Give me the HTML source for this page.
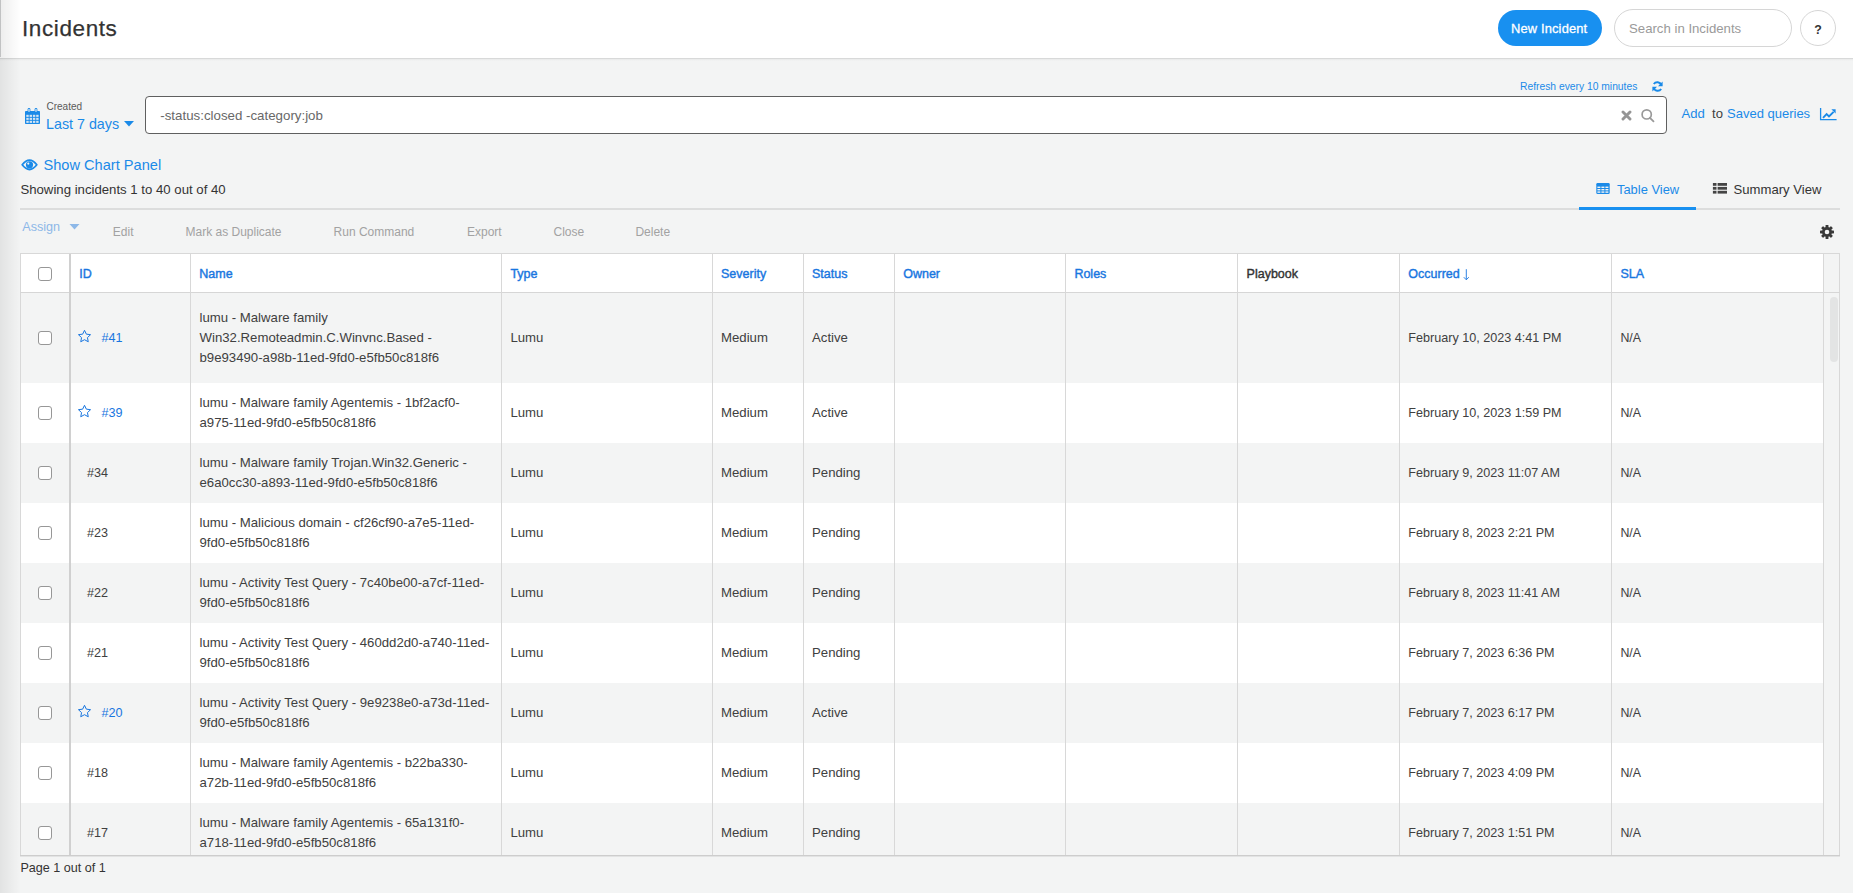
<!DOCTYPE html>
<html><head><meta charset="utf-8"><title>Incidents</title>
<style>
html,body{margin:0;padding:0;}
body{width:1853px;height:893px;overflow:hidden;position:relative;background:#f3f4f4;font-family:"Liberation Sans", sans-serif;}
.t{position:absolute;white-space:nowrap;}
.r{position:absolute;}
</style></head><body>
<div class="r" style="left:0px;top:0px;width:1853px;height:58px;background:#fff;"></div>
<div class="r" style="left:0px;top:58px;width:1853px;height:1px;background:#d8d9d9;"></div>
<div class="r" style="left:0px;top:59px;width:1853px;height:2px;background:linear-gradient(#e8e9e9,#f3f4f4);"></div>
<div class="r" style="left:0px;top:0px;width:1px;height:57px;background:#cfd0d1;"></div>
<div class="t" style="left:22px;top:18px;font-size:22.5px;line-height:22.5px;color:#333;letter-spacing:0.6px;-webkit-text-stroke:0.25px #333;">Incidents</div>
<div class="r" style="left:1498px;top:10px;width:104px;height:36px;background:#1890f0;border-radius:18px;"></div>
<div class="t" style="left:1511px;top:23px;font-size:12.9px;line-height:12.9px;color:#fff;letter-spacing:0.15px;-webkit-text-stroke:0.3px #fff;">New Incident</div>
<div class="r" style="left:1614px;top:9px;width:178px;height:38px;box-sizing:border-box;border:1px solid #d6d6d6;border-radius:19px;background:#fff;"></div>
<div class="t" style="left:1629px;top:22px;font-size:13.2px;line-height:13.2px;color:#9a9a9a;">Search in Incidents</div>
<div class="r" style="left:1800px;top:10px;width:36px;height:36px;box-sizing:border-box;border:1px solid #d6d6d6;border-radius:18px;background:#fff;"></div>
<div class="t" style="left:1814.3px;top:24px;font-size:12.4px;line-height:12.4px;color:#333;font-weight:700;">?</div>
<div class="t" style="left:1520px;top:82px;font-size:10.3px;line-height:10.3px;color:#1a8ae8;">Refresh every 10 minutes</div>
<svg class="r" style="left:1652px;top:81px" width="11" height="11" viewBox="0 0 11 11"><path d="M9.3 4.0A4.3 4.3 0 0 0 1.8 3.0" fill="none" stroke="#1a8ae8" stroke-width="1.9"/><path d="M10.6 0.6v4.6H6.0z" fill="#1a8ae8"/><path d="M1.7 7.0A4.3 4.3 0 0 0 9.2 8.0" fill="none" stroke="#1a8ae8" stroke-width="1.9"/><path d="M0.4 10.4V5.8H5.0z" fill="#1a8ae8"/></svg>
<svg class="r" style="left:25px;top:108px" width="15" height="16" viewBox="0 0 15 16"><rect x="0" y="3" width="15" height="13" rx="0.8" fill="#1a8ae8"/><rect x="2.6" y="0" width="2.8" height="4.6" rx="1.4" fill="#1a8ae8"/><rect x="9.6" y="0" width="2.8" height="4.6" rx="1.4" fill="#1a8ae8"/><rect x="3.4" y="0.9" width="1.2" height="3" rx="0.6" fill="#f3f4f4"/><rect x="10.4" y="0.9" width="1.2" height="3" rx="0.6" fill="#f3f4f4"/><rect x="1.30" y="6.80" width="2.4" height="2.1" fill="#f3f4f4" opacity="0.85"/><rect x="4.60" y="6.80" width="2.4" height="2.1" fill="#f3f4f4" opacity="0.85"/><rect x="7.90" y="6.80" width="2.4" height="2.1" fill="#f3f4f4" opacity="0.85"/><rect x="11.20" y="6.80" width="2.4" height="2.1" fill="#f3f4f4" opacity="0.85"/><rect x="1.30" y="9.80" width="2.4" height="2.1" fill="#f3f4f4" opacity="0.85"/><rect x="4.60" y="9.80" width="2.4" height="2.1" fill="#f3f4f4" opacity="0.85"/><rect x="7.90" y="9.80" width="2.4" height="2.1" fill="#f3f4f4" opacity="0.85"/><rect x="11.20" y="9.80" width="2.4" height="2.1" fill="#f3f4f4" opacity="0.85"/><rect x="1.30" y="12.80" width="2.4" height="2.1" fill="#f3f4f4" opacity="0.85"/><rect x="4.60" y="12.80" width="2.4" height="2.1" fill="#f3f4f4" opacity="0.85"/><rect x="7.90" y="12.80" width="2.4" height="2.1" fill="#f3f4f4" opacity="0.85"/><rect x="11.20" y="12.80" width="2.4" height="2.1" fill="#f3f4f4" opacity="0.85"/></svg>
<div class="t" style="left:46.4px;top:102px;font-size:10.06px;line-height:10.06px;color:#5a5a5a;">Created</div>
<div class="t" style="left:46px;top:117px;font-size:14.3px;line-height:14.3px;color:#1a8ae8;">Last 7 days</div>
<svg class="r" style="left:124px;top:121px" width="10" height="6" viewBox="0 0 10 6"><path d="M0 0h10L5 5.6z" fill="#1a8ae8"/></svg>
<div class="r" style="left:145px;top:96px;width:1522px;height:38px;box-sizing:border-box;border:1px solid #5f5f5f;border-radius:4px;background:#fff;"></div>
<div class="t" style="left:160.3px;top:109px;font-size:13.3px;line-height:13.3px;color:#686868;">-status:closed -category:job</div>
<svg class="r" style="left:1621px;top:110px" width="11" height="11" viewBox="0 0 11 11"><path d="M2 2l7 7M9 2l-7 7" stroke="#959595" stroke-width="2.9" stroke-linecap="round"/></svg>
<svg class="r" style="left:1640px;top:108px" width="16" height="15" viewBox="0 0 16 15"><circle cx="6.7" cy="6.4" r="4.6" fill="none" stroke="#999" stroke-width="1.7"/><path d="M9.9 9.8l3.6 3.6" stroke="#999" stroke-width="1.8" stroke-linecap="round"/></svg>
<div class="t" style="left:1681.6px;top:107px;font-size:13.1px;line-height:13.1px;color:#1a8ae8;">Add</div>
<div class="t" style="left:1712px;top:107px;font-size:13.1px;line-height:13.1px;color:#404040;">to</div>
<div class="t" style="left:1727px;top:107px;font-size:13.0px;line-height:13.0px;color:#1a8ae8;">Saved queries</div>
<svg class="r" style="left:1819px;top:107px" width="18" height="14" viewBox="0 0 18 14"><path d="M1.6 1v11.6h16" fill="none" stroke="#1a8ae8" stroke-width="1.3"/><path d="M4.0 10.8l3.6-3.8 2.4 2.4 4.6-4.6" fill="none" stroke="#1a8ae8" stroke-width="1.9"/><path d="M12.4 2.2h4.2v4.2z" fill="#1a8ae8"/></svg>
<svg class="r" style="left:21px;top:159px" width="17" height="12" viewBox="0 0 17 12"><path d="M1.2 5.8Q8.5 -3.6 15.8 5.8Q8.5 15.2 1.2 5.8z" fill="none" stroke="#1a8ae8" stroke-width="1.8" stroke-linejoin="round"/><circle cx="8.5" cy="5.8" r="3.6" fill="#1a8ae8"/><circle cx="7.3" cy="4.6" r="1.1" fill="#f3f4f4"/></svg>
<div class="t" style="left:43.5px;top:158px;font-size:14.6px;line-height:14.6px;color:#1a8ae8;">Show Chart Panel</div>
<div class="t" style="left:20.4px;top:183px;font-size:13.2px;line-height:13.2px;color:#333;">Showing incidents 1 to 40 out of 40</div>
<div class="r" style="left:20px;top:208px;width:1820px;height:2px;background:#dcdddd;"></div>
<div class="r" style="left:1579px;top:207px;width:117px;height:3px;background:#1890f0;"></div>
<svg class="r" style="left:1596px;top:183px" width="14" height="11" viewBox="0 0 14 11"><rect x="0.3" y="0" width="13.4" height="11" rx="1.2" fill="#1a8ae8"/><rect x="1.40" y="3.60" width="3.0" height="1.4" fill="#f3f4f4"/><rect x="5.40" y="3.60" width="3.0" height="1.4" fill="#f3f4f4"/><rect x="9.40" y="3.60" width="3.0" height="1.4" fill="#f3f4f4"/><rect x="1.40" y="6.00" width="3.0" height="1.4" fill="#f3f4f4"/><rect x="5.40" y="6.00" width="3.0" height="1.4" fill="#f3f4f4"/><rect x="9.40" y="6.00" width="3.0" height="1.4" fill="#f3f4f4"/><rect x="1.40" y="8.40" width="3.0" height="1.4" fill="#f3f4f4"/><rect x="5.40" y="8.40" width="3.0" height="1.4" fill="#f3f4f4"/><rect x="9.40" y="8.40" width="3.0" height="1.4" fill="#f3f4f4"/></svg>
<div class="t" style="left:1617px;top:184px;font-size:12.9px;line-height:12.9px;color:#1a8ae8;">Table View</div>
<svg class="r" style="left:1712px;top:183px" width="15" height="11" viewBox="0 0 15 11"><rect x="0.9" y="0.00" width="3.6" height="2.8" fill="#444"/><rect x="5.6" y="0.00" width="9.4" height="2.8" fill="#444"/><rect x="0.9" y="3.90" width="3.6" height="2.8" fill="#444"/><rect x="5.6" y="3.90" width="9.4" height="2.8" fill="#444"/><rect x="0.9" y="7.80" width="3.6" height="2.8" fill="#444"/><rect x="5.6" y="7.80" width="9.4" height="2.8" fill="#444"/></svg>
<div class="t" style="left:1733.6px;top:183px;font-size:13.1px;line-height:13.1px;color:#333;">Summary View</div>
<div class="t" style="left:22.3px;top:221px;font-size:12.6px;line-height:12.6px;color:#8db8e8;">Assign</div>
<svg class="r" style="left:69px;top:224px" width="11" height="6" viewBox="0 0 11 6"><path d="M0.5 0h10L5.5 5.6z" fill="#8db8e8"/></svg>
<div class="t" style="left:112.8px;top:226px;font-size:12.0px;line-height:12.0px;color:#a2a2a2;">Edit</div>
<div class="t" style="left:185.5px;top:226px;font-size:12.0px;line-height:12.0px;color:#a2a2a2;">Mark as Duplicate</div>
<div class="t" style="left:333.6px;top:226px;font-size:12.0px;line-height:12.0px;color:#a2a2a2;">Run Command</div>
<div class="t" style="left:467px;top:226px;font-size:12.0px;line-height:12.0px;color:#a2a2a2;">Export</div>
<div class="t" style="left:553.5px;top:226px;font-size:12.0px;line-height:12.0px;color:#a2a2a2;">Close</div>
<div class="t" style="left:635.4px;top:226px;font-size:12.0px;line-height:12.0px;color:#a2a2a2;">Delete</div>
<svg class="r" style="left:1820px;top:225px" width="14" height="14" viewBox="0 0 14 14"><circle cx="7" cy="7" r="4.9" fill="#383838"/><rect x="5.55" y="0" width="2.9" height="3.8" rx="0.6" fill="#383838" transform="rotate(0 7 7)"/><rect x="5.55" y="0" width="2.9" height="3.8" rx="0.6" fill="#383838" transform="rotate(45 7 7)"/><rect x="5.55" y="0" width="2.9" height="3.8" rx="0.6" fill="#383838" transform="rotate(90 7 7)"/><rect x="5.55" y="0" width="2.9" height="3.8" rx="0.6" fill="#383838" transform="rotate(135 7 7)"/><rect x="5.55" y="0" width="2.9" height="3.8" rx="0.6" fill="#383838" transform="rotate(180 7 7)"/><rect x="5.55" y="0" width="2.9" height="3.8" rx="0.6" fill="#383838" transform="rotate(225 7 7)"/><rect x="5.55" y="0" width="2.9" height="3.8" rx="0.6" fill="#383838" transform="rotate(270 7 7)"/><rect x="5.55" y="0" width="2.9" height="3.8" rx="0.6" fill="#383838" transform="rotate(315 7 7)"/><circle cx="7" cy="7" r="2.3" fill="#f3f4f4"/></svg>
<div class="r" style="left:20px;top:253px;width:1820px;height:603px;box-sizing:border-box;border:1px solid #d8d8d8;background:#f3f4f4;"></div>
<div class="r" style="left:21px;top:254px;width:1802px;height:39px;background:#fff;"></div>
<div class="r" style="left:20px;top:292px;width:1820px;height:1px;background:#d6d6d6;"></div>
<div class="r" style="left:0;top:0;width:1853px;height:855px;overflow:hidden">
<div class="r" style="left:21px;top:293px;width:1802px;height:90px;background:#f3f4f4;"></div>
<div class="r" style="left:38px;top:331px;width:14px;height:14px;box-sizing:border-box;border:1px solid #979797;border-radius:3px;background:#fff;"></div>
<svg class="r" style="left:77px;top:329px" width="15" height="14" viewBox="0 0 15 14"><path d="M7.5 1.3l1.85 3.85 4.2.55-3.1 2.9.8 4.15L7.5 10.7l-3.75 2.05.8-4.15-3.1-2.9 4.2-.55z" fill="none" stroke="#1876e0" stroke-width="1.0" stroke-linejoin="round"/></svg>
<div class="t" style="left:101.4px;top:332px;font-size:12.6px;line-height:12.6px;color:#1876e0;">#41</div>
<div class="t" style="left:199.5px;top:311px;font-size:13.2px;line-height:13.2px;color:#404040;">lumu - Malware family</div>
<div class="t" style="left:199.5px;top:331px;font-size:13.2px;line-height:13.2px;color:#404040;">Win32.Remoteadmin.C.Winvnc.Based -</div>
<div class="t" style="left:199.5px;top:351px;font-size:13.2px;line-height:13.2px;color:#404040;">b9e93490-a98b-11ed-9fd0-e5fb50c818f6</div>
<div class="t" style="left:510.4px;top:331px;font-size:13.2px;line-height:13.2px;color:#404040;">Lumu</div>
<div class="t" style="left:721px;top:331px;font-size:13.2px;line-height:13.2px;color:#404040;">Medium</div>
<div class="t" style="left:812px;top:331px;font-size:13.2px;line-height:13.2px;color:#404040;">Active</div>
<div class="t" style="left:1408.3px;top:332px;font-size:12.6px;line-height:12.6px;color:#404040;">February 10, 2023 4:41 PM</div>
<div class="t" style="left:1620.4px;top:332px;font-size:12.4px;line-height:12.4px;color:#404040;">N/A</div>
<div class="r" style="left:21px;top:383px;width:1802px;height:60px;background:#ffffff;"></div>
<div class="r" style="left:38px;top:406px;width:14px;height:14px;box-sizing:border-box;border:1px solid #979797;border-radius:3px;background:#fff;"></div>
<svg class="r" style="left:77px;top:404px" width="15" height="14" viewBox="0 0 15 14"><path d="M7.5 1.3l1.85 3.85 4.2.55-3.1 2.9.8 4.15L7.5 10.7l-3.75 2.05.8-4.15-3.1-2.9 4.2-.55z" fill="none" stroke="#1876e0" stroke-width="1.0" stroke-linejoin="round"/></svg>
<div class="t" style="left:101.4px;top:407px;font-size:12.6px;line-height:12.6px;color:#1876e0;">#39</div>
<div class="t" style="left:199.5px;top:396px;font-size:13.2px;line-height:13.2px;color:#404040;">lumu - Malware family Agentemis - 1bf2acf0-</div>
<div class="t" style="left:199.5px;top:416px;font-size:13.2px;line-height:13.2px;color:#404040;">a975-11ed-9fd0-e5fb50c818f6</div>
<div class="t" style="left:510.4px;top:406px;font-size:13.2px;line-height:13.2px;color:#404040;">Lumu</div>
<div class="t" style="left:721px;top:406px;font-size:13.2px;line-height:13.2px;color:#404040;">Medium</div>
<div class="t" style="left:812px;top:406px;font-size:13.2px;line-height:13.2px;color:#404040;">Active</div>
<div class="t" style="left:1408.3px;top:407px;font-size:12.6px;line-height:12.6px;color:#404040;">February 10, 2023 1:59 PM</div>
<div class="t" style="left:1620.4px;top:407px;font-size:12.4px;line-height:12.4px;color:#404040;">N/A</div>
<div class="r" style="left:21px;top:443px;width:1802px;height:60px;background:#f3f4f4;"></div>
<div class="r" style="left:38px;top:466px;width:14px;height:14px;box-sizing:border-box;border:1px solid #979797;border-radius:3px;background:#fff;"></div>
<div class="t" style="left:87px;top:467px;font-size:12.6px;line-height:12.6px;color:#404040;">#34</div>
<div class="t" style="left:199.5px;top:456px;font-size:13.2px;line-height:13.2px;color:#404040;">lumu - Malware family Trojan.Win32.Generic -</div>
<div class="t" style="left:199.5px;top:476px;font-size:13.2px;line-height:13.2px;color:#404040;">e6a0cc30-a893-11ed-9fd0-e5fb50c818f6</div>
<div class="t" style="left:510.4px;top:466px;font-size:13.2px;line-height:13.2px;color:#404040;">Lumu</div>
<div class="t" style="left:721px;top:466px;font-size:13.2px;line-height:13.2px;color:#404040;">Medium</div>
<div class="t" style="left:812px;top:466px;font-size:13.2px;line-height:13.2px;color:#404040;">Pending</div>
<div class="t" style="left:1408.3px;top:467px;font-size:12.6px;line-height:12.6px;color:#404040;">February 9, 2023 11:07 AM</div>
<div class="t" style="left:1620.4px;top:467px;font-size:12.4px;line-height:12.4px;color:#404040;">N/A</div>
<div class="r" style="left:21px;top:503px;width:1802px;height:60px;background:#ffffff;"></div>
<div class="r" style="left:38px;top:526px;width:14px;height:14px;box-sizing:border-box;border:1px solid #979797;border-radius:3px;background:#fff;"></div>
<div class="t" style="left:87px;top:527px;font-size:12.6px;line-height:12.6px;color:#404040;">#23</div>
<div class="t" style="left:199.5px;top:516px;font-size:13.2px;line-height:13.2px;color:#404040;">lumu - Malicious domain - cf26cf90-a7e5-11ed-</div>
<div class="t" style="left:199.5px;top:536px;font-size:13.2px;line-height:13.2px;color:#404040;">9fd0-e5fb50c818f6</div>
<div class="t" style="left:510.4px;top:526px;font-size:13.2px;line-height:13.2px;color:#404040;">Lumu</div>
<div class="t" style="left:721px;top:526px;font-size:13.2px;line-height:13.2px;color:#404040;">Medium</div>
<div class="t" style="left:812px;top:526px;font-size:13.2px;line-height:13.2px;color:#404040;">Pending</div>
<div class="t" style="left:1408.3px;top:527px;font-size:12.6px;line-height:12.6px;color:#404040;">February 8, 2023 2:21 PM</div>
<div class="t" style="left:1620.4px;top:527px;font-size:12.4px;line-height:12.4px;color:#404040;">N/A</div>
<div class="r" style="left:21px;top:563px;width:1802px;height:60px;background:#f3f4f4;"></div>
<div class="r" style="left:38px;top:586px;width:14px;height:14px;box-sizing:border-box;border:1px solid #979797;border-radius:3px;background:#fff;"></div>
<div class="t" style="left:87px;top:587px;font-size:12.6px;line-height:12.6px;color:#404040;">#22</div>
<div class="t" style="left:199.5px;top:576px;font-size:13.2px;line-height:13.2px;color:#404040;">lumu - Activity Test Query - 7c40be00-a7cf-11ed-</div>
<div class="t" style="left:199.5px;top:596px;font-size:13.2px;line-height:13.2px;color:#404040;">9fd0-e5fb50c818f6</div>
<div class="t" style="left:510.4px;top:586px;font-size:13.2px;line-height:13.2px;color:#404040;">Lumu</div>
<div class="t" style="left:721px;top:586px;font-size:13.2px;line-height:13.2px;color:#404040;">Medium</div>
<div class="t" style="left:812px;top:586px;font-size:13.2px;line-height:13.2px;color:#404040;">Pending</div>
<div class="t" style="left:1408.3px;top:587px;font-size:12.6px;line-height:12.6px;color:#404040;">February 8, 2023 11:41 AM</div>
<div class="t" style="left:1620.4px;top:587px;font-size:12.4px;line-height:12.4px;color:#404040;">N/A</div>
<div class="r" style="left:21px;top:623px;width:1802px;height:60px;background:#ffffff;"></div>
<div class="r" style="left:38px;top:646px;width:14px;height:14px;box-sizing:border-box;border:1px solid #979797;border-radius:3px;background:#fff;"></div>
<div class="t" style="left:87px;top:647px;font-size:12.6px;line-height:12.6px;color:#404040;">#21</div>
<div class="t" style="left:199.5px;top:636px;font-size:13.2px;line-height:13.2px;color:#404040;">lumu - Activity Test Query - 460dd2d0-a740-11ed-</div>
<div class="t" style="left:199.5px;top:656px;font-size:13.2px;line-height:13.2px;color:#404040;">9fd0-e5fb50c818f6</div>
<div class="t" style="left:510.4px;top:646px;font-size:13.2px;line-height:13.2px;color:#404040;">Lumu</div>
<div class="t" style="left:721px;top:646px;font-size:13.2px;line-height:13.2px;color:#404040;">Medium</div>
<div class="t" style="left:812px;top:646px;font-size:13.2px;line-height:13.2px;color:#404040;">Pending</div>
<div class="t" style="left:1408.3px;top:647px;font-size:12.6px;line-height:12.6px;color:#404040;">February 7, 2023 6:36 PM</div>
<div class="t" style="left:1620.4px;top:647px;font-size:12.4px;line-height:12.4px;color:#404040;">N/A</div>
<div class="r" style="left:21px;top:683px;width:1802px;height:60px;background:#f3f4f4;"></div>
<div class="r" style="left:38px;top:706px;width:14px;height:14px;box-sizing:border-box;border:1px solid #979797;border-radius:3px;background:#fff;"></div>
<svg class="r" style="left:77px;top:704px" width="15" height="14" viewBox="0 0 15 14"><path d="M7.5 1.3l1.85 3.85 4.2.55-3.1 2.9.8 4.15L7.5 10.7l-3.75 2.05.8-4.15-3.1-2.9 4.2-.55z" fill="none" stroke="#1876e0" stroke-width="1.0" stroke-linejoin="round"/></svg>
<div class="t" style="left:101.4px;top:707px;font-size:12.6px;line-height:12.6px;color:#1876e0;">#20</div>
<div class="t" style="left:199.5px;top:696px;font-size:13.2px;line-height:13.2px;color:#404040;">lumu - Activity Test Query - 9e9238e0-a73d-11ed-</div>
<div class="t" style="left:199.5px;top:716px;font-size:13.2px;line-height:13.2px;color:#404040;">9fd0-e5fb50c818f6</div>
<div class="t" style="left:510.4px;top:706px;font-size:13.2px;line-height:13.2px;color:#404040;">Lumu</div>
<div class="t" style="left:721px;top:706px;font-size:13.2px;line-height:13.2px;color:#404040;">Medium</div>
<div class="t" style="left:812px;top:706px;font-size:13.2px;line-height:13.2px;color:#404040;">Active</div>
<div class="t" style="left:1408.3px;top:707px;font-size:12.6px;line-height:12.6px;color:#404040;">February 7, 2023 6:17 PM</div>
<div class="t" style="left:1620.4px;top:707px;font-size:12.4px;line-height:12.4px;color:#404040;">N/A</div>
<div class="r" style="left:21px;top:743px;width:1802px;height:60px;background:#ffffff;"></div>
<div class="r" style="left:38px;top:766px;width:14px;height:14px;box-sizing:border-box;border:1px solid #979797;border-radius:3px;background:#fff;"></div>
<div class="t" style="left:87px;top:767px;font-size:12.6px;line-height:12.6px;color:#404040;">#18</div>
<div class="t" style="left:199.5px;top:756px;font-size:13.2px;line-height:13.2px;color:#404040;">lumu - Malware family Agentemis - b22ba330-</div>
<div class="t" style="left:199.5px;top:776px;font-size:13.2px;line-height:13.2px;color:#404040;">a72b-11ed-9fd0-e5fb50c818f6</div>
<div class="t" style="left:510.4px;top:766px;font-size:13.2px;line-height:13.2px;color:#404040;">Lumu</div>
<div class="t" style="left:721px;top:766px;font-size:13.2px;line-height:13.2px;color:#404040;">Medium</div>
<div class="t" style="left:812px;top:766px;font-size:13.2px;line-height:13.2px;color:#404040;">Pending</div>
<div class="t" style="left:1408.3px;top:767px;font-size:12.6px;line-height:12.6px;color:#404040;">February 7, 2023 4:09 PM</div>
<div class="t" style="left:1620.4px;top:767px;font-size:12.4px;line-height:12.4px;color:#404040;">N/A</div>
<div class="r" style="left:21px;top:803px;width:1802px;height:60px;background:#f3f4f4;"></div>
<div class="r" style="left:38px;top:826px;width:14px;height:14px;box-sizing:border-box;border:1px solid #979797;border-radius:3px;background:#fff;"></div>
<div class="t" style="left:87px;top:827px;font-size:12.6px;line-height:12.6px;color:#404040;">#17</div>
<div class="t" style="left:199.5px;top:816px;font-size:13.2px;line-height:13.2px;color:#404040;">lumu - Malware family Agentemis - 65a131f0-</div>
<div class="t" style="left:199.5px;top:836px;font-size:13.2px;line-height:13.2px;color:#404040;">a718-11ed-9fd0-e5fb50c818f6</div>
<div class="t" style="left:510.4px;top:826px;font-size:13.2px;line-height:13.2px;color:#404040;">Lumu</div>
<div class="t" style="left:721px;top:826px;font-size:13.2px;line-height:13.2px;color:#404040;">Medium</div>
<div class="t" style="left:812px;top:826px;font-size:13.2px;line-height:13.2px;color:#404040;">Pending</div>
<div class="t" style="left:1408.3px;top:827px;font-size:12.6px;line-height:12.6px;color:#404040;">February 7, 2023 1:51 PM</div>
<div class="t" style="left:1620.4px;top:827px;font-size:12.4px;line-height:12.4px;color:#404040;">N/A</div>
</div>
<div class="r" style="left:1823px;top:293px;width:16px;height:562px;background:#f3f4f4;"></div>
<div class="r" style="left:1830px;top:297px;width:8px;height:65px;background:#e3e4e4;border-radius:4px;"></div>
<div class="r" style="left:190px;top:254px;width:1px;height:601px;background:#d8d8d8;"></div>
<div class="r" style="left:501px;top:254px;width:1px;height:601px;background:#d8d8d8;"></div>
<div class="r" style="left:712px;top:254px;width:1px;height:601px;background:#d8d8d8;"></div>
<div class="r" style="left:803px;top:254px;width:1px;height:601px;background:#d8d8d8;"></div>
<div class="r" style="left:894px;top:254px;width:1px;height:601px;background:#d8d8d8;"></div>
<div class="r" style="left:1065px;top:254px;width:1px;height:601px;background:#d8d8d8;"></div>
<div class="r" style="left:1237px;top:254px;width:1px;height:601px;background:#d8d8d8;"></div>
<div class="r" style="left:1399px;top:254px;width:1px;height:601px;background:#d8d8d8;"></div>
<div class="r" style="left:1611px;top:254px;width:1px;height:601px;background:#d8d8d8;"></div>
<div class="r" style="left:1823px;top:254px;width:1px;height:601px;background:#d8d8d8;"></div>
<div class="r" style="left:69px;top:254px;width:2px;height:601px;background:#d0d0d0;"></div>
<div class="r" style="left:38px;top:267px;width:14px;height:14px;box-sizing:border-box;border:1px solid #979797;border-radius:3px;background:#fff;"></div>
<div class="t" style="left:79.3px;top:268px;font-size:12.5px;line-height:12.5px;color:#1876e0;-webkit-text-stroke:0.4px #1876e0;">ID</div>
<div class="t" style="left:199.3px;top:268px;font-size:12.5px;line-height:12.5px;color:#1876e0;-webkit-text-stroke:0.4px #1876e0;">Name</div>
<div class="t" style="left:510.4px;top:268px;font-size:12.5px;line-height:12.5px;color:#1876e0;-webkit-text-stroke:0.4px #1876e0;">Type</div>
<div class="t" style="left:721px;top:268px;font-size:12.5px;line-height:12.5px;color:#1876e0;-webkit-text-stroke:0.4px #1876e0;">Severity</div>
<div class="t" style="left:812px;top:268px;font-size:12.5px;line-height:12.5px;color:#1876e0;-webkit-text-stroke:0.4px #1876e0;">Status</div>
<div class="t" style="left:903.2px;top:268px;font-size:12.5px;line-height:12.5px;color:#1876e0;-webkit-text-stroke:0.4px #1876e0;">Owner</div>
<div class="t" style="left:1074.4px;top:268px;font-size:12.5px;line-height:12.5px;color:#1876e0;-webkit-text-stroke:0.4px #1876e0;">Roles</div>
<div class="t" style="left:1408.3px;top:268px;font-size:12.5px;line-height:12.5px;color:#1876e0;-webkit-text-stroke:0.4px #1876e0;">Occurred</div>
<div class="t" style="left:1620.4px;top:268px;font-size:12.5px;line-height:12.5px;color:#1876e0;-webkit-text-stroke:0.4px #1876e0;">SLA</div>
<div class="t" style="left:1246.6px;top:268px;font-size:12.5px;line-height:12.5px;color:#333;-webkit-text-stroke:0.4px #333;">Playbook</div>
<svg class="r" style="left:1463px;top:269px" width="7" height="12" viewBox="0 0 7 12"><path d="M3.3 0.2v10.3M0.8 8.2L3.3 10.8l2.5-2.6" fill="none" stroke="#1876e0" stroke-width="0.9"/></svg>
<div class="r" style="left:20px;top:855px;width:1820px;height:1px;background:#cdcdcd;"></div>
<div class="r" style="left:20px;top:856px;width:1820px;height:1px;background:#e2e3e3;"></div>
<div class="t" style="left:20.4px;top:862px;font-size:12.6px;line-height:12.6px;color:#333;">Page 1 out of 1</div>
<div class="r" style="left:0px;top:0px;width:21px;height:893px;background:linear-gradient(to right,rgba(0,0,0,0.07),rgba(0,0,0,0));"></div>
</body></html>
